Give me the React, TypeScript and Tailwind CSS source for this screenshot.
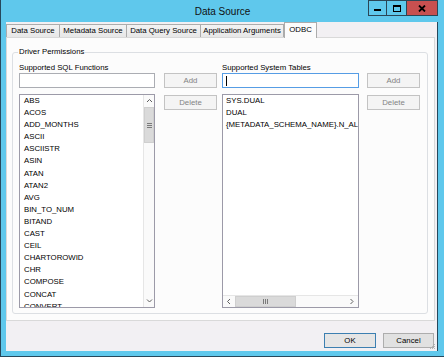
import type { ReactNode } from 'react'

const SQL_FUNCTIONS = [
  'ABS',
  'ACOS',
  'ADD_MONTHS',
  'ASCII',
  'ASCIISTR',
  'ASIN',
  'ATAN',
  'ATAN2',
  'AVG',
  'BIN_TO_NUM',
  'BITAND',
  'CAST',
  'CEIL',
  'CHARTOROWID',
  'CHR',
  'COMPOSE',
  'CONCAT',
  'CONVERT',
]

const SYSTEM_TABLES = ['SYS.DUAL', 'DUAL', '{METADATA_SCHEMA_NAME}.N_ALIAS_TABLES']

const TABS: { label: string; width: string; last?: boolean }[] = [
  { label: 'Data Source', width: 'w-[53px]' },
  { label: 'Metadata Source', width: 'w-[67px]' },
  { label: 'Data Query Source', width: 'w-[74px]' },
  { label: 'Application Arguments', width: 'w-[84px]', last: true },
]

function DisabledButton({ children, className = '' }: { children: ReactNode; className?: string }) {
  return (
    <div
      className={`flex h-[15px] w-[53px] items-center justify-center border border-[#c3c3c3] bg-[#f4f4f4] text-[#838383] ${className}`}
    >
      {children}
    </div>
  )
}

function Chevron({ dir }: { dir: 'up' | 'down' | 'left' | 'right' }) {
  const d = {
    up: 'M1 4 L3.5 1.5 L6 4',
    down: 'M1 1.5 L3.5 4 L6 1.5',
    left: 'M4 1 L1.5 3.5 L4 6',
    right: 'M1.5 1 L4 3.5 L1.5 6',
  }[dir]
  const vertical = dir === 'up' || dir === 'down'
  return (
    <svg width={vertical ? 7 : 6} height={vertical ? 6 : 7} viewBox={vertical ? '0 0 7 6' : '0 0 6 7'}>
      <path d={d} fill="none" stroke="#606060" strokeWidth="1" />
    </svg>
  )
}

export default function App() {
  return (
    <div className="flex h-[357px] w-[444px] flex-col border-b border-l border-[#26485c] bg-[#5fc8ec] font-['Liberation_Sans',Arial,sans-serif] text-[7.8px] text-black">
      {/* title bar */}
      <div className="relative flex h-[22px] items-center justify-center">
        <span className="text-[10px] text-[#111]">Data Source</span>
        <div className="absolute right-[6px] top-0 flex">
          <div className="flex h-[16px] w-[19px] items-end justify-center border border-[#2a4656] pb-[4px]">
            <div className="h-[2px] w-[7px] bg-black" />
          </div>
          <div className="-ml-px flex h-[16px] w-[21px] items-center justify-center border border-[#2a4656]">
            <div className="h-[7px] w-[8px] border border-t-2 border-black" />
          </div>
          <div className="-ml-px flex h-[16px] w-[32px] items-center justify-center border border-[#2a4656] bg-[#c75050]">
            <svg width="8" height="7" viewBox="0 0 8 7">
              <path d="M1 0.5 L7 6.5 M7 0.5 L1 6.5" stroke="#000" strokeWidth="1.8" />
            </svg>
          </div>
        </div>
      </div>

      {/* client area */}
      <div className="relative ml-[5px] flex h-[329px] w-[432px] flex-col border-r border-[#26485c] bg-[#f2f0f3]">
        {/* tab strip */}
        <div className="flex h-[15px] items-end">
          {TABS.map((t) => (
            <div
              key={t.label}
              className={`flex h-[13px] items-center justify-center border-l border-t border-[#acacac] bg-gradient-to-b from-[#f3f3f3] to-[#e7e7e7] ${t.width} ${t.last ? 'border-r' : ''}`}
            >
              {t.label}
            </div>
          ))}
          <div className="relative z-10 -mb-px flex h-[16px] w-[33px] items-center justify-center border-l border-r border-t border-[#acacac] bg-[#fcfcfc] pb-[2px]">
            ODBC
          </div>
        </div>

        {/* tab panel */}
        <div className="h-[284px] w-[429px] border border-[#d9d9d9] bg-[#fcfcfc]">
          <div className="relative ml-[5px] mt-[14px] h-[262px] w-[416px] rounded-[3px] border border-[#dcdfe3]">
            <span className="absolute -top-[7px] left-[5px] bg-[#fcfcfc] px-px leading-[11px]">
              Driver Permissions
            </span>

            <div className="flex gap-[5px] pl-[6px] pt-[9px]">
              {/* SQL functions */}
              <div className="flex w-[198px] flex-col">
                <div className="h-[11px] leading-[11px]">Supported SQL Functions</div>
                <div className="flex gap-[9px]">
                  <div className="h-[15px] w-[136px] border border-[#abadb3] bg-white" />
                  <DisabledButton>Add</DisabledButton>
                </div>
                <div className="mt-[6px] flex gap-[9px]">
                  <div className="flex h-[214px] w-[136px] border border-[#9c9aa8] bg-white">
                    <div className="flex-1 overflow-hidden pl-[4px]">
                      {SQL_FUNCTIONS.map((f) => (
                        <div key={f} className="h-[12.1px] leading-[12.1px]">
                          {f}
                        </div>
                      ))}
                    </div>
                    <div className="flex w-[11px] flex-col border-l border-[#e6e6e6] bg-[#fafafa]">
                      <div className="flex h-[12px] items-center justify-center">
                        <Chevron dir="up" />
                      </div>
                      <div className="flex h-[36px] items-center justify-center border border-[#cfcfcf] bg-[#dadada]">
                        <div className="flex flex-col gap-px">
                          <div className="h-px w-[5px] bg-[#7a7a7a]" />
                          <div className="h-px w-[5px] bg-[#7a7a7a]" />
                          <div className="h-px w-[5px] bg-[#7a7a7a]" />
                        </div>
                      </div>
                      <div className="flex-1" />
                      <div className="flex h-[12px] items-center justify-center">
                        <Chevron dir="down" />
                      </div>
                    </div>
                  </div>
                  <DisabledButton className="mt-px">Delete</DisabledButton>
                </div>
              </div>

              {/* system tables */}
              <div className="flex w-[198px] flex-col">
                <div className="h-[11px] leading-[11px]">Supported System Tables</div>
                <div className="flex gap-[8px]">
                  <div className="flex h-[15px] w-[137px] items-center border border-[#569de5] bg-white pl-[3px]">
                    <div className="h-[10px] w-px bg-black" />
                  </div>
                  <DisabledButton>Add</DisabledButton>
                </div>
                <div className="mt-[6px] flex gap-[8px]">
                  <div className="flex h-[214px] w-[137px] flex-col border border-[#9c9aa8] bg-white">
                    <div className="flex-1 overflow-hidden whitespace-nowrap pl-[3px]">
                      {SYSTEM_TABLES.map((t) => (
                        <div key={t} className="h-[12.1px] leading-[12.1px]">
                          {t}
                        </div>
                      ))}
                    </div>
                    <div className="flex h-[12px] border-t border-[#e6e6e6] bg-[#fafafa]">
                      <div className="flex w-[12px] items-center justify-center">
                        <Chevron dir="left" />
                      </div>
                      <div className="flex w-[61px] items-center justify-center gap-px border border-[#cfcfcf] bg-[#dadada]">
                        <div className="h-[5px] w-px bg-[#7a7a7a]" />
                        <div className="h-[5px] w-px bg-[#7a7a7a]" />
                        <div className="h-[5px] w-px bg-[#7a7a7a]" />
                      </div>
                      <div className="flex-1" />
                      <div className="flex w-[12px] items-center justify-center">
                        <Chevron dir="right" />
                      </div>
                    </div>
                  </div>
                  <DisabledButton className="mt-px">Delete</DisabledButton>
                </div>
              </div>
            </div>
          </div>
        </div>

        {/* dialog buttons */}
        <div className="mt-[12px] flex justify-end gap-[7px] pr-[3px]">
          <div className="flex h-[15px] w-[52px] items-center justify-center border border-[#3c7fb1] bg-[#e5e5e5]">
            OK
          </div>
          <div className="flex h-[15px] w-[51px] items-center justify-center border border-[#adadad] bg-[#e1e1e1]">
            Cancel
          </div>
        </div>

        {/* size grip */}
        <svg className="absolute bottom-px right-px" width="6" height="6" viewBox="0 0 6 6">
          <rect x="4" y="0" width="1" height="1" fill="#b5b5b5" />
          <rect x="2" y="2" width="1" height="1" fill="#b5b5b5" />
          <rect x="4" y="2" width="1" height="1" fill="#b5b5b5" />
          <rect x="0" y="4" width="1" height="1" fill="#b5b5b5" />
          <rect x="2" y="4" width="1" height="1" fill="#b5b5b5" />
          <rect x="4" y="4" width="1" height="1" fill="#b5b5b5" />
        </svg>
      </div>
    </div>
  )
}
